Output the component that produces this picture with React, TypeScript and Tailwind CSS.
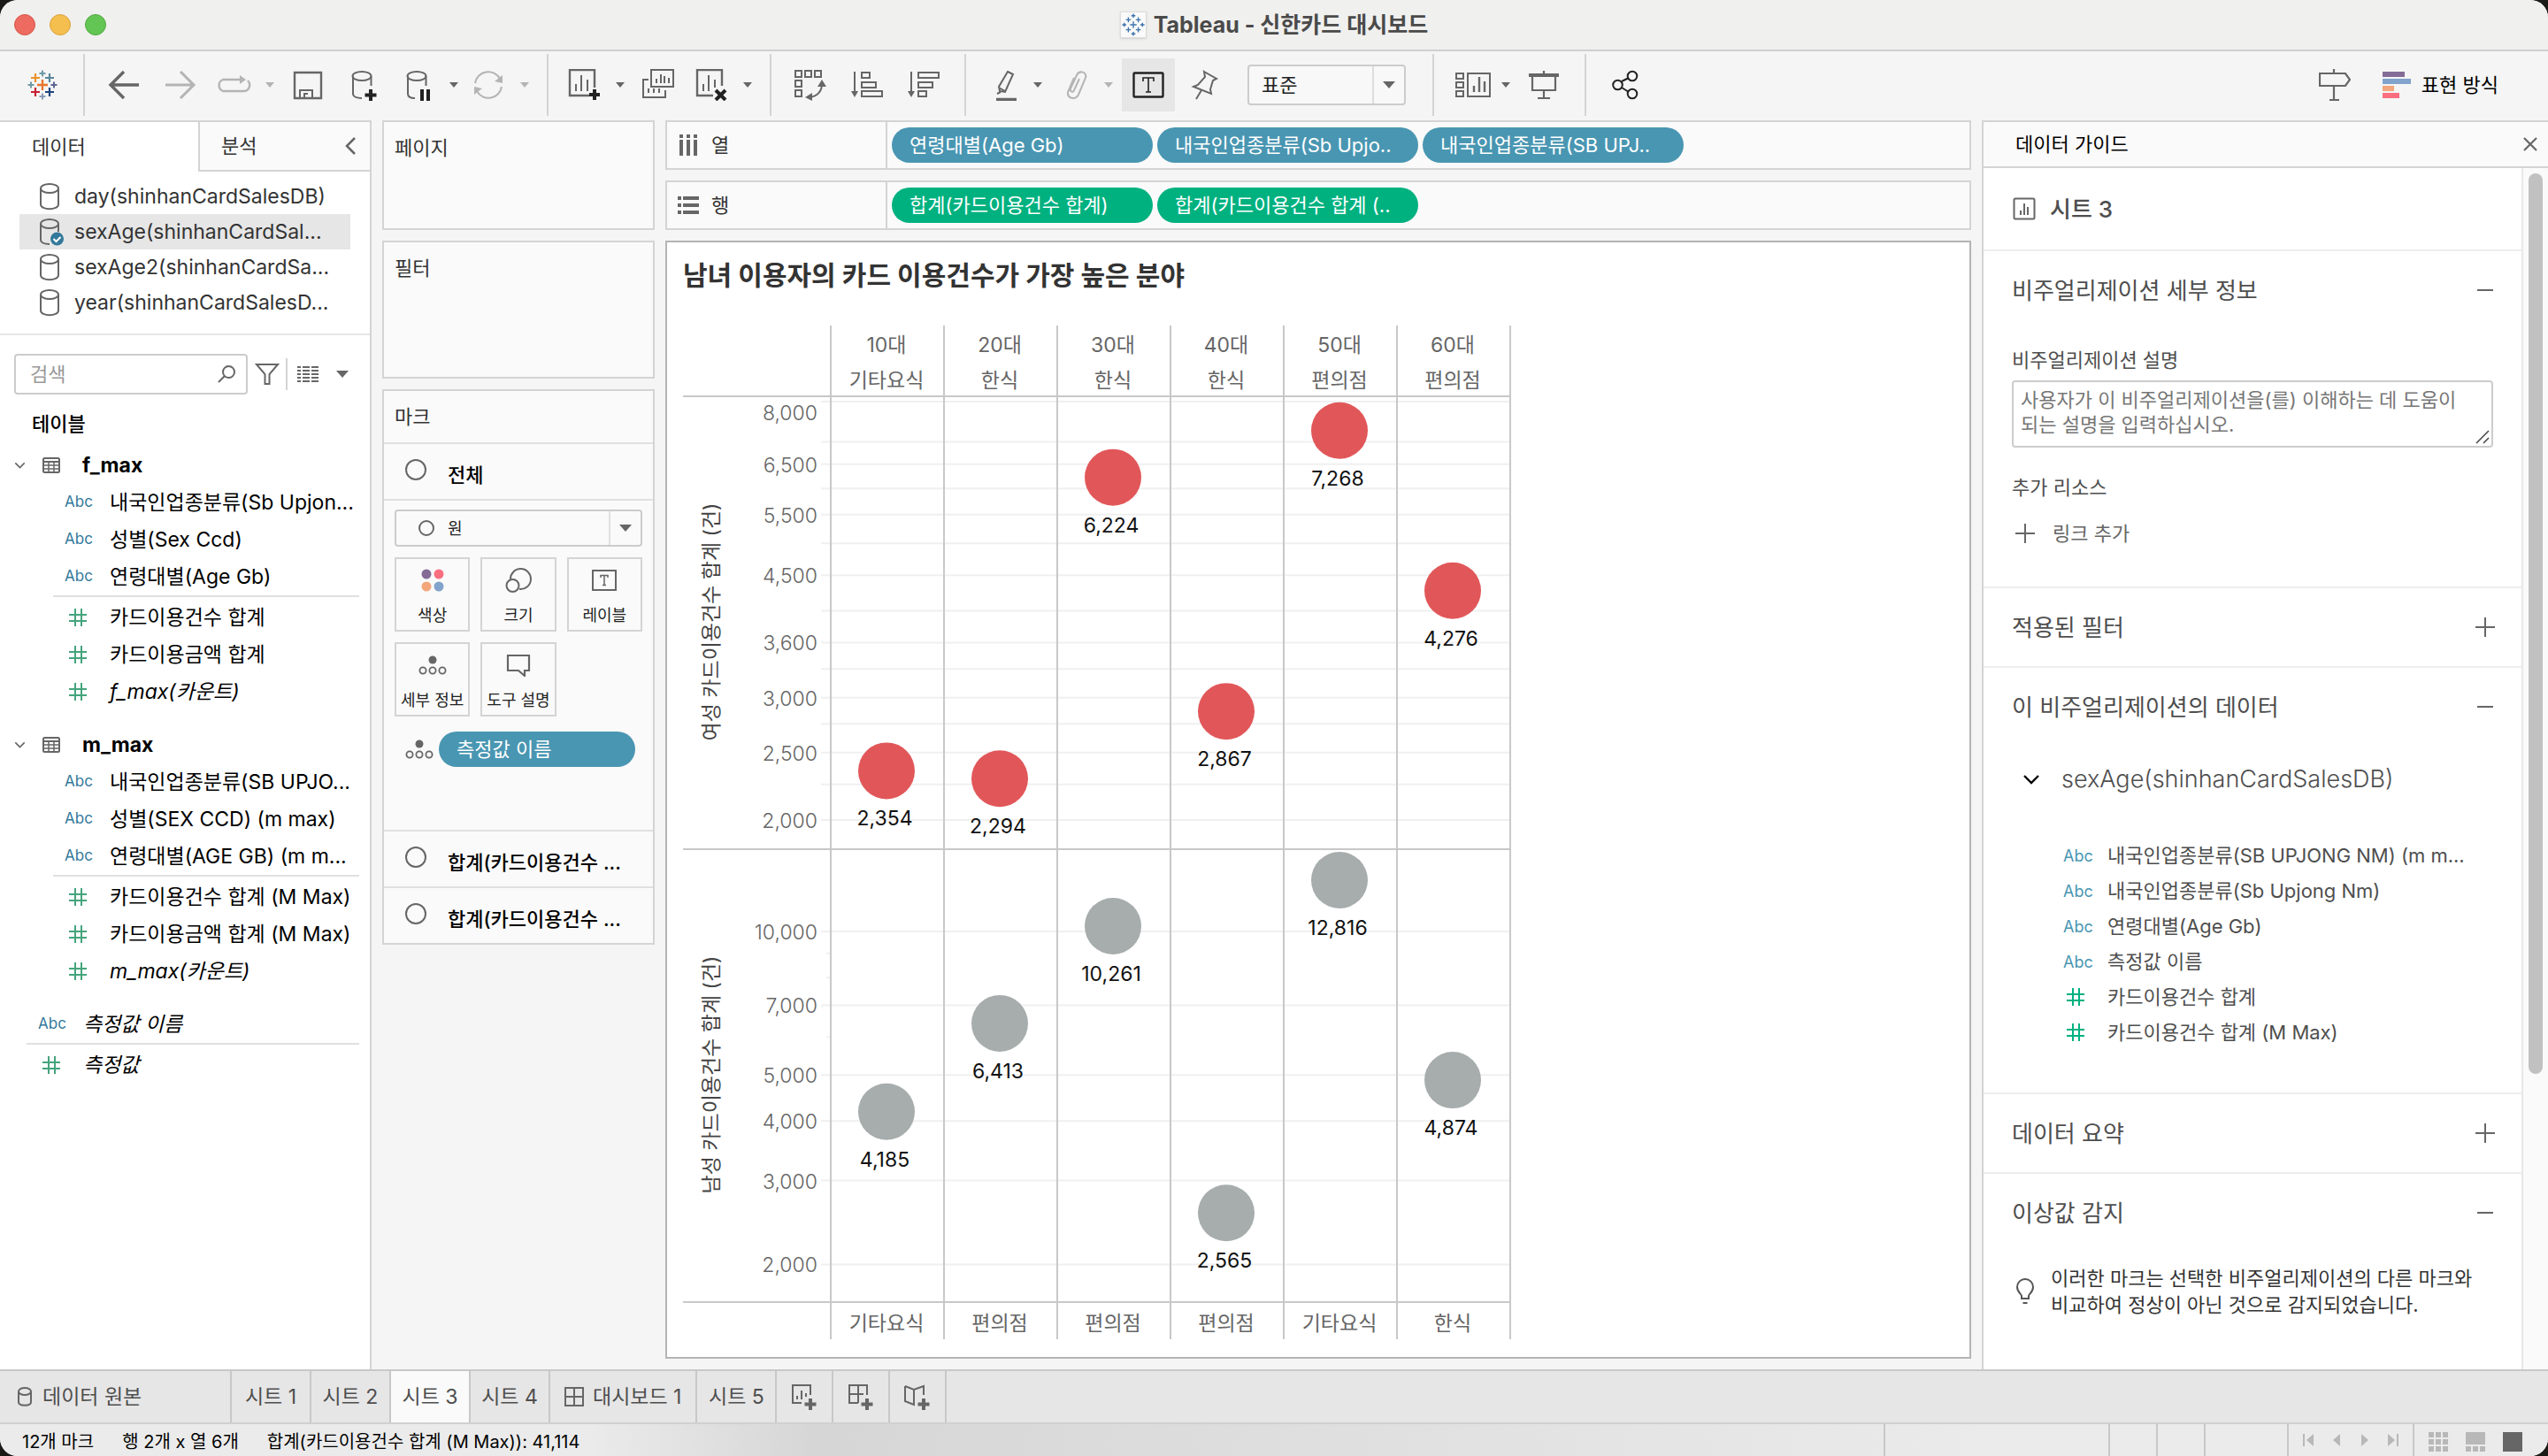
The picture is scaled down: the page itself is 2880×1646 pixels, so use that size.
import React from "react";
import type { ReactNode } from "react";

/* ---------- small drawing helpers ---------- */

type SvgProps = { className?: string; children: ReactNode };

// every toolbar icon is drawn on the same 36 x 36 grid
const Tool36 = ({ className = "", children }: SvgProps) => (
  <svg
    viewBox="0 0 36 36"
    fill="none"
    stroke="currentColor"
    strokeWidth="2"
    className={`h-9 w-9 shrink-0 ${className}`}
    aria-hidden="true"
  >
    {children}
  </svg>
);

const Caret = ({ className = "" }: { className?: string }) => (
  <svg viewBox="0 0 10 6" className={`h-[6px] w-[10px] shrink-0 ${className}`} aria-hidden="true">
    <path d="M0 0h10L5 6z" fill="currentColor" />
  </svg>
);

const BigCaret = () => (
  <svg viewBox="0 0 14 8" className="h-2 w-[14px] shrink-0 text-[#666]" aria-hidden="true">
    <path d="M0 0h14L7 8z" fill="currentColor" />
  </svg>
);

const Divider = ({ className = "" }: { className?: string }) => (
  <span className={`h-[70px] w-[2px] shrink-0 bg-[#d4d4d4] ${className}`} />
);

const Chevron = ({ className = "" }: { className?: string }) => (
  <svg viewBox="0 0 20 12" className={className} fill="none" stroke="currentColor" strokeWidth="2.4" aria-hidden="true">
    <path d="M2 2l8 8 8-8" />
  </svg>
);

const Hash = ({ className = "" }: { className?: string }) => (
  <svg viewBox="0 0 20 20" className={`h-5 w-5 shrink-0 ${className}`} fill="none" stroke="currentColor" strokeWidth="2" aria-hidden="true">
    <path d="M0 7h20M0 14h20M7 0v20M14 0v20" />
  </svg>
);

const Circle = ({ className = "" }: { className?: string }) => (
  <span className={`shrink-0 rounded-full border-2 border-[#666] ${className}`} />
);

const DetailDots = () => (
  <svg viewBox="0 0 32 22" className="h-[22px] w-8 shrink-0" fill="none" stroke="#666" strokeWidth="1.8" aria-hidden="true">
    <circle cx="16" cy="5" r="4.5" fill="#666" stroke="none" />
    <circle cx="5" cy="17" r="3.6" />
    <circle cx="16" cy="17" r="3.6" />
    <circle cx="27" cy="17" r="3.6" />
  </svg>
);

const Plus = ({ x, y, s, c, w = 2 }: { x: number; y: number; s: number; c: string; w?: number }) => (
  <path d={`M${x - s} ${y}H${x + s}M${x} ${y - s}V${y + s}`} stroke={c} strokeWidth={w} />
);

/* ---------- title bar ---------- */

const TitleBar = () => (
  <header className="relative flex h-[58px] shrink-0 items-center justify-center border-b-2 border-[#d0d0d0] bg-[#f0f0ee]">
    <div className="absolute left-4 flex gap-4">
      <button type="button" aria-label="닫기" className="h-6 w-6 rounded-full border border-[#d75549] bg-[#ed6b60]" />
      <button type="button" aria-label="최소화" className="h-6 w-6 rounded-full border border-[#d8a13d] bg-[#f5bf4f]" />
      <button type="button" aria-label="확대" className="h-6 w-6 rounded-full border border-[#54a941] bg-[#62c554]" />
    </div>
    <h1 className="flex items-center gap-2 text-[25px] font-bold leading-8 text-[#4a4a4a]">
      <svg viewBox="0 0 30 30" className="h-[30px] w-[30px] border border-[#ddd] bg-[#fafafa] shadow" fill="none" aria-hidden="true">
        <Plus x={15} y={15} s={4} c="#3d74ab" w={1.5} />
        <Plus x={9} y={9} s={3} c="#3d74ab" w={1.5} />
        <Plus x={21} y={9} s={3} c="#3d74ab" w={1.5} />
        <Plus x={9} y={21} s={3} c="#3d74ab" w={1.5} />
        <Plus x={21} y={21} s={3} c="#3d74ab" w={1.5} />
        <Plus x={15} y={4} s={2.5} c="#3d74ab" w={1.5} />
        <Plus x={15} y={26} s={2.5} c="#3d74ab" w={1.5} />
        <Plus x={4} y={15} s={2.5} c="#3d74ab" w={1.5} />
        <Plus x={26} y={15} s={2.5} c="#3d74ab" w={1.5} />
      </svg>
      Tableau - 신한카드 대시보드
    </h1>
  </header>
);

/* ---------- toolbar ---------- */

type ToolProps = { label: string; className?: string; children: ReactNode };

const Tool = ({ label, className = "", children }: ToolProps) => (
  <button type="button" aria-label={label} title={label} className={`flex shrink-0 items-center ${className}`}>
    {children}
  </button>
);

const Toolbar = () => (
  <nav aria-label="도구 모음" className="flex h-[78px] shrink-0 items-center pb-[2px] pl-[30px] pr-14 text-[#666]">
    <Tool label="시작 페이지">
      <Tool36>
        <Plus x={18} y={18} s={6} c="#e8762d" w={2.4} />
        <Plus x={10} y={10} s={5} c="#eb912c" w={2.2} />
        <Plus x={26} y={10} s={5} c="#59879b" w={2.2} />
        <Plus x={10} y={26} s={5} c="#c72035" w={2.2} />
        <Plus x={26} y={26} s={5} c="#1f457e" w={2.2} />
        <Plus x={18} y={5} s={3.5} c="#7099a6" />
        <Plus x={18} y={31} s={3.5} c="#8b9bb8" />
        <Plus x={5} y={18} s={3.5} c="#7099a6" />
        <Plus x={31} y={18} s={3.5} c="#5c6692" />
      </Tool36>
    </Tool>
    <Divider className="ml-7" />
    <Tool label="뒤로" className="ml-6.5">
      <Tool36>
        <path d="M3 18h32M18 3L3 18l15 15" strokeWidth="3.4" />
      </Tool36>
    </Tool>
    <Tool label="앞으로" className="ml-7 text-[#b4b4b4]">
      <Tool36>
        <path d="M1 18h32M18 3l15 15-15 15" strokeWidth="3" />
      </Tool36>
    </Tool>
    <Tool label="다시 실행" className="ml-6 text-[#b4b4b4]">
      <Tool36 className="overflow-visible">
        <path d="M27 12H6a7 7 0 0 0 0 13h24a7 7 0 0 0 4-12" strokeWidth="2.4" />
        <path d="M25 7l7 5-7 5z" fill="currentColor" stroke="none" />
      </Tool36>
    </Tool>
    <Caret className="ml-4.5 text-[#b4b4b4]" />
    <Tool label="저장" className="ml-5">
      <Tool36>
        <path d="M3 4h30v29H3z" strokeWidth="2.4" />
        <path d="M9 33V24h14v9M14 33v-5h4" />
      </Tool36>
    </Tool>
    <Tool label="새 데이터 원본" className="ml-7">
      <Tool36>
        <ellipse cx="15" cy="8" rx="10.5" ry="5" />
        <path d="M5 8v20c0 3 4 5 10 5M25.5 8v11" />
        <path d="M25 23v13M18.5 29.5h13" stroke="#222" strokeWidth="4" />
      </Tool36>
    </Tool>
    <Tool label="자동 업데이트 일시 중지" className="ml-6.5">
      <Tool36>
        <ellipse cx="15" cy="8" rx="10.5" ry="5" />
        <path d="M5 8v20c0 3 3 5 8 5M25.5 8v11" />
        <path d="M21 23v13M28 23v13" stroke="#222" strokeWidth="4" />
      </Tool36>
    </Tool>
    <Caret className="ml-4" />
    <Tool label="새로 고침" className="ml-4 text-[#b4b4b4]">
      <Tool36>
        <path d="M3 16A15 15 0 0 1 31 11M33 20A15 15 0 0 1 5 25" />
        <path d="M34 7v9l-9-2zM2 29v-9l9 2z" fill="currentColor" stroke="none" />
      </Tool36>
    </Tool>
    <Caret className="ml-4.5 text-[#b4b4b4]" />
    <Divider className="ml-5" />
    <Tool label="새 워크시트" className="ml-5.5">
      <Tool36>
        <path d="M24 30H2V1h28v20" strokeWidth="2.4" />
        <path d="M9 25v-8M15 25V7M22 25V12" />
        <path d="M30 23v12M24 29h12" stroke="#222" strokeWidth="4" />
      </Tool36>
    </Tool>
    <Caret className="ml-4.5" />
    <Tool label="복제" className="ml-5">
      <Tool36>
        <path d="M10 1h25v19H10z" />
        <path d="M16 16v-5M21 16V6M25 16V8M30 16v-6" />
        <path d="M7 12H1v20h25v-8M7 27v-5M13 27v-5M19 27v-5" />
      </Tool36>
    </Tool>
    <Tool label="시트 지우기" className="ml-6">
      <Tool36>
        <path d="M20 30H2V1h28v18" strokeWidth="2.4" />
        <path d="M9 25v-8M15 25V7M22 21V12" />
        <path d="M23 24l11 11M34 24L23 35" stroke="#222" strokeWidth="4" />
      </Tool36>
    </Tool>
    <Caret className="ml-4.5" />
    <Divider className="ml-5" />
    <Tool label="행과 열 바꾸기" className="ml-6.5">
      <Tool36>
        <path d="M1 2h7v7H1zM12 2h7v7h-7zM23 2h7v7h-7zM1 13h7v7H1zM1 24h7v7H1z" />
        <path d="M31 17c0 8-5 14-14 15" />
        <path d="M31 12l5 8H26zM12 32l8-5v9z" fill="currentColor" stroke="none" />
      </Tool36>
    </Tool>
    <Tool label="오름차순 정렬" className="ml-7">
      <Tool36>
        <path d="M4 3v24M12 4h9v6h-9zM12 15h16v6H12zM12 25h23v6H12z" />
        <path d="M0 25h8l-4 7z" fill="currentColor" stroke="none" />
      </Tool36>
    </Tool>
    <Tool label="내림차순 정렬" className="ml-7">
      <Tool36>
        <path d="M4 3v24M12 4h23v6H12zM12 15h16v6H12zM12 25h9v6h-9z" />
        <path d="M0 25h8l-4 7z" fill="currentColor" stroke="none" />
      </Tool36>
    </Tool>
    <Divider className="ml-7" />
    <Tool label="하이라이트" className="ml-7">
      <Tool36>
        <path d="M19 3l6 3-9 20-6-1-1-5zM9 21l7 4M7 28l4-2" />
        <path d="M6 34.5h23" strokeWidth="3.5" />
      </Tool36>
    </Tool>
    <Caret className="ml-3" />
    <Tool label="멤버 그룹화" className="ml-5 text-[#b4b4b4]">
      <Tool36>
        <path d="M22 11l-6 13c-1 3-5 2-4-2l7-15c3-6 12-4 10 3l-8 19c-3 6-13 5-12-3l7-16" />
      </Tool36>
    </Tool>
    <Caret className="ml-3.5 text-[#b4b4b4]" />
    <Tool label="마크 레이블 표시" className="ml-2.5 h-[60px] w-[60px] justify-center bg-[#e6e6e6]">
      <svg viewBox="0 0 36 30" className="h-[30px] w-9" fill="none" stroke="#222" aria-hidden="true">
        <rect x="1.5" y="1.5" width="33" height="27" rx="1" strokeWidth="2.4" />
        <path d="M12 11V7h12v4M18 7v16M15 23h6" strokeWidth="1.6" />
      </svg>
    </Tool>
    <Tool label="축 고정" className="ml-4">
      <Tool36>
        <path d="M17 3l14 8-4 2-3 10 1 5L5 20l5-2 8-9zM14 24L8 34" />
      </Tool36>
    </Tool>
    <div className="relative ml-7.5 flex h-[46px] w-[179px] shrink-0 items-center">
      <select
        aria-label="맞춤"
        className="h-full w-full appearance-none rounded-sm border-2 border-[#ccc] bg-[#f8f8f8] pl-[14px] text-[22px] text-[#222]"
      >
        <option>표준</option>
      </select>
      <span className="pointer-events-none absolute right-[2px] flex h-[42px] w-9 items-center justify-center border-l-2 border-[#ddd]">
        <BigCaret />
      </span>
    </div>
    <Divider className="ml-7.5" />
    <Tool label="카드 표시/숨기기" className="ml-6.5">
      <Tool36 className="overflow-visible">
        <path d="M-1 5h8v6h-8zM-1 15h8v6h-8zM-1 25h8v6h-8zM12 5h25v26H12z" />
        <path d="M19 26v-7M25 26V9M31 26V14" strokeWidth="2.4" />
      </Tool36>
    </Tool>
    <Caret className="ml-3.5" />
    <Tool label="프레젠테이션 모드" className="ml-5">
      <Tool36>
        <path d="M1 7h34" strokeWidth="4" />
        <path d="M5 8v16h26V8M18 2v3M18 24v9M11 33h14" strokeWidth="2.2" />
      </Tool36>
    </Tool>
    <Divider className="ml-7" />
    <Tool label="공유" className="ml-6.5 text-[#222]">
      <Tool36>
        <path d="M14 14l8-4M14 21l8 5" />
        <circle cx="9.5" cy="18" r="5.3" />
        <circle cx="26" cy="8" r="5.3" />
        <circle cx="26" cy="28" r="5.3" />
      </Tool36>
    </Tool>
    <Tool label="데이터 가이드" className="ml-auto">
      <Tool36>
        <path d="M1 5h29l5 7-5 7H1zM17 0v5M17 19v16M12 35h11" strokeWidth="2.2" />
      </Tool36>
    </Tool>
    <button type="button" className="ml-9 flex shrink-0 items-center gap-3 text-[22px] text-black">
      <svg viewBox="0 0 32 30" className="h-[30px] w-8" aria-hidden="true">
        <path d="M0 0h25v6H0z" fill="#846c96" />
        <path d="M0 8h32v6H0z" fill="#82a3cb" />
        <path d="M0 16h13v6H0z" fill="#f4a67c" />
        <path d="M0 24h19v6H0z" fill="#fa6f80" />
      </svg>
      표현 방식
    </button>
  </nav>
);

/* ---------- data pane ---------- */

const sources = [
  { name: "day(shinhanCardSalesDB)", active: false },
  { name: "sexAge(shinhanCardSal...", active: true },
  { name: "sexAge2(shinhanCardSa...", active: false },
  { name: "year(shinhanCardSalesD...", active: false },
];

const tables = [
  {
    name: "f_max",
    dimensions: ["내국인업종분류(Sb Upjon...", "성별(Sex Ccd)", "연령대별(Age Gb)"],
    measures: ["카드이용건수 합계", "카드이용금액 합계"],
    count: "f_max(카운트)",
  },
  {
    name: "m_max",
    dimensions: ["내국인업종분류(SB UPJO...", "성별(SEX CCD) (m max)", "연령대별(AGE GB) (m m..."],
    measures: ["카드이용건수 합계 (M Max)", "카드이용금액 합계 (M Max)"],
    count: "m_max(카운트)",
  },
];

const DbIcon = ({ checked }: { checked: boolean }) => (
  <svg viewBox="0 0 28 32" className="h-8 w-7 shrink-0" fill="none" stroke="#666" strokeWidth="2" aria-hidden="true">
    <ellipse cx="11" cy="7" rx="10" ry="5" />
    <path d={checked ? "M1 7v18c0 3 4 5 10 5M21 7v9" : "M1 7v18c0 7 20 7 20 0V7"} />
    {checked && (
      <>
        <circle cx="19.5" cy="24" r="7.5" fill="#33799b" stroke="none" />
        <path d="M15.5 24l3 3 5-5" stroke="#fff" />
      </>
    )}
  </svg>
);

const TableIcon = () => (
  <svg viewBox="0 0 20 18" className="h-[18px] w-5 shrink-0" fill="none" stroke="#666" strokeWidth="2" aria-hidden="true">
    <rect x="1" y="1" width="18" height="16" rx="1.5" />
    <path d="M1 5h18" />
    <path d="M2 9h16M2 13h16M7 5v12M13 5v12" strokeWidth="1.5" />
  </svg>
);

const FieldRow = ({ kind, name, italic = false }: { kind: "abc" | "num"; name: string; italic?: boolean }) => (
  <li className="flex h-[42px] items-center text-[23px]">
    <span className="flex w-[51px] shrink-0 items-center">
      {kind === "abc" ? (
        <span className="text-[17px] text-[#33799b]">Abc</span>
      ) : (
        <Hash className="ml-[5px] text-[#45a47c]" />
      )}
    </span>
    <span className={italic ? "whitespace-nowrap italic" : "whitespace-nowrap"}>{name}</span>
  </li>
);

const DataPane = () => (
  <aside className="flex w-[420px] shrink-0 flex-col border-r-2 border-t-2 border-[#d4d4d4] bg-white text-[22px] text-black">
    <div className="flex h-14 shrink-0">
      <button type="button" className="w-[224px] pl-9 text-left text-[#333]">
        데이터
      </button>
      <div className="flex flex-1 items-center justify-between border-b-2 border-l-2 border-[#d4d4d4] bg-[#fafafa] pl-6 pr-4 text-[#333]">
        <button type="button">분석</button>
        <button type="button" aria-label="창 접기" className="text-[#666]">
          <svg viewBox="0 0 12 20" className="h-5 w-3" fill="none" stroke="currentColor" strokeWidth="2.5" aria-hidden="true">
            <path d="M11 1L2 10l9 9" />
          </svg>
        </button>
      </div>
    </div>

    <ul className="mt-2 shrink-0 pl-[22px] pr-[22px] text-[23px] text-[#333]">
      {sources.map((s) => (
        <li
          key={s.name}
          className={
            s.active
              ? "flex h-10 items-center gap-[11px] bg-[#e6e6e6] pl-[23px]"
              : "flex h-10 items-center gap-[11px] pl-[23px]"
          }
        >
          <DbIcon checked={s.active} />
          <span className="whitespace-nowrap">{s.name}</span>
        </li>
      ))}
    </ul>

    <div className="mt-[15px] border-t-2 border-[#e6e6e6]" />

    <div className="mt-[21px] flex shrink-0 items-center pl-4">
      <div className="flex h-[46px] w-[264px] items-center rounded-sm border-2 border-[#ccc] pl-4 pr-3">
        <input
          type="text"
          aria-label="검색"
          placeholder="검색"
          className="w-full min-w-0 bg-transparent outline-none placeholder:text-[#999]"
        />
        <svg viewBox="0 0 20 20" className="h-5 w-5 shrink-0" fill="none" stroke="#666" strokeWidth="2" aria-hidden="true">
          <circle cx="12.5" cy="7.5" r="6.5" />
          <path d="M8 12l-7 7" />
        </svg>
      </div>
      <button type="button" aria-label="필터" className="ml-2">
        <svg viewBox="0 0 28 26" className="h-[26px] w-7" fill="none" stroke="#666" strokeWidth="2" aria-hidden="true">
          <path d="M2 2h24L16.5 13v11h-5V13z" />
        </svg>
      </button>
      <span className="ml-[7px] h-9 w-[2px] bg-[#d4d4d4]" />
      <button type="button" aria-label="보기" className="ml-[11px] flex items-center gap-5">
        <svg viewBox="0 0 24 18" className="h-[18px] w-6" stroke="#666" strokeWidth="2" aria-hidden="true">
          <path d="M0 1h4M6 1h8M16 1h8M0 5h4M6 5h8M16 5h8M0 9h4M6 9h8M16 9h8M0 13h4M6 13h8M16 13h8M0 17h4M6 17h8M16 17h8" />
        </svg>
        <BigCaret />
      </button>
    </div>

    <h2 className="mt-[17px] h-8 pl-9 font-medium leading-8">테이블</h2>

    <div className="mt-[10px]">
      {tables.map((t) => (
        <section key={t.name} className="mb-[18px]">
          <h3 className="flex h-[42px] items-center pl-4 text-[23px] font-bold">
            <Chevron className="h-2 w-[13px] text-[#666]" />
            <span className="ml-[19px] mr-[25px] flex">
              <TableIcon />
            </span>
            {t.name}
          </h3>
          <ul className="pl-[73px]">
            {t.dimensions.map((d) => (
              <FieldRow key={d} kind="abc" name={d} />
            ))}
          </ul>
          <div className="ml-[60px] mr-3 border-t-2 border-[#e0e0e0]" />
          <ul className="pl-[73px] pt-[2px]">
            {t.measures.map((m) => (
              <FieldRow key={m} kind="num" name={m} />
            ))}
            <FieldRow kind="num" name={t.count} italic />
          </ul>
        </section>
      ))}
      <ul className="pl-[43px]">
        <FieldRow kind="abc" name="측정값 이름" italic />
      </ul>
      <div className="ml-[30px] mr-3 border-t-2 border-[#e0e0e0]" />
      <ul className="pl-[43px] pt-[2px]">
        <FieldRow kind="num" name="측정값" italic />
      </ul>
    </div>
  </aside>
);

/* ---------- cards column ---------- */

const MarkRow = ({ name }: { name: string }) => (
  <button type="button" className="flex h-16 w-full items-center border-t-2 border-[#e0e0e0] pl-6 text-left font-medium text-black">
    <Circle className="mb-1 mr-6 h-6 w-6" />
    <span className="whitespace-nowrap pt-2">{name}</span>
  </button>
);

const MarkButton = ({ label, children }: { label: string; children: ReactNode }) => (
  <button type="button" className="flex h-[84px] flex-col items-center border-2 border-[#d4d4d4] pt-2 text-[18px] text-[#222]">
    <span className="flex h-8 items-center">{children}</span>
    <span className="mt-2 whitespace-nowrap leading-8">{label}</span>
  </button>
);

const Cards = () => (
  <div className="ml-3 flex w-[308px] shrink-0 flex-col gap-3 text-[22px] text-[#333]">
    <section className="h-[124px] border-2 border-[#d4d4d4] bg-[#fafafa] px-3 pt-[13px]">
      <h2 className="leading-8">페이지</h2>
    </section>
    <section className="h-[156px] border-2 border-[#d4d4d4] bg-[#fafafa] px-3 pt-[13px]">
      <h2 className="leading-8">필터</h2>
    </section>
    <section className="border-2 border-[#d4d4d4] bg-[#fafafa]">
      <h2 className="flex h-[58px] items-center px-3">마크</h2>
      <MarkRow name="전체" />
      <div className="h-[374px] border-t-2 border-[#e0e0e0] px-3 pt-[10px]">
        <div className="relative flex h-[42px] items-center">
          <select
            aria-label="마크 유형"
            className="h-full w-full appearance-none rounded-sm border-2 border-[#ccc] bg-[#fafafa] pl-[58px] text-[18px] text-[#222]"
          >
            <option>원</option>
          </select>
          <Circle className="pointer-events-none absolute left-[27px] h-[18px] w-[18px]" />
          <span className="pointer-events-none absolute right-[2px] flex h-[38px] w-9 items-center justify-center border-l-2 border-[#e0e0e0]">
            <BigCaret />
          </span>
        </div>
        <div className="mt-3 grid grid-cols-3 gap-3">
          <MarkButton label="색상">
            <svg viewBox="0 0 26 26" className="h-[26px] w-[26px]" aria-hidden="true">
              <circle cx="6" cy="6" r="5.5" fill="#846c96" />
              <circle cx="20" cy="6" r="5.5" fill="#fa6f80" />
              <circle cx="6" cy="20" r="5.5" fill="#f4a67c" />
              <circle cx="20" cy="20" r="5.5" fill="#82a3cb" />
            </svg>
          </MarkButton>
          <MarkButton label="크기">
            <svg viewBox="0 0 30 28" className="h-7 w-[30px]" fill="none" stroke="#666" strokeWidth="2" aria-hidden="true">
              <path d="M6 13a11.500 11.500 0 1 1 10 11" />
              <circle cx="8.5" cy="20" r="7" />
            </svg>
          </MarkButton>
          <MarkButton label="레이블">
            <svg viewBox="0 0 28 24" className="h-6 w-7" fill="none" stroke="#666" strokeWidth="2" aria-hidden="true">
              <path d="M1 1h26v22H1z" />
              <path d="M10 9V6.500h8V9M14 6.500v11M12 17.500h4" strokeWidth="1.5" />
            </svg>
          </MarkButton>
          <MarkButton label="세부 정보">
            <DetailDots />
          </MarkButton>
          <MarkButton label="도구 설명">
            <svg viewBox="0 0 28 26" className="h-[26px] w-7" fill="none" stroke="#666" strokeWidth="2.2" aria-hidden="true">
              <path d="M2 2h24v17h-5v6l-7-6H2z" />
            </svg>
          </MarkButton>
        </div>
        <div className="mt-[17px] flex items-center pl-3 pr-2">
          <DetailDots />
          <button type="button" className="ml-[6px] h-10 flex-1 rounded-full bg-[#4996b2] pl-5 text-left text-white">
            측정값 이름
          </button>
        </div>
      </div>
      <MarkRow name="합계(카드이용건수 ..." />
      <MarkRow name="합계(카드이용건수 ..." />
    </section>
  </div>
);

/* ---------- shelves ---------- */

const Shelf = ({ label, icon, children }: { label: string; icon: ReactNode; children: ReactNode }) => (
  <div className="flex h-14 shrink-0 items-stretch border-2 border-[#d4d4d4] bg-[#fafafa] text-[22px]">
    <div className="flex w-[249px] items-center gap-[14px] border-r-2 border-[#d4d4d4] pl-3 text-[#333]">
      {icon}
      {label}
    </div>
    <div className="flex items-center gap-[5px] pl-[5px]">{children}</div>
  </div>
);

const bluePills = ["연령대별(Age Gb)", "내국인업종분류(Sb Upjo..", "내국인업종분류(SB UPJ.."];
const greenPills = ["합계(카드이용건수 합계)", "합계(카드이용건수 합계 (.."];

/* ---------- chart ---------- */

const COL_W = 128;
const LEFT = 167;
const TOP = 80;
const MID = 592;
const BOTTOM = 1104;
const RIGHT = LEFT + COL_W * 6;

const yFemale = (v: number) => 86 + 341.2 * Math.log(8000 / v);
const yMale = (v: number) => 685 + 233.9 * Math.log(10000 / v);

const columns = [
  { age: "10대", female: "기타요식", male: "기타요식", f: 2354, m: 4185 },
  { age: "20대", female: "한식", male: "편의점", f: 2294, m: 6413 },
  { age: "30대", female: "한식", male: "편의점", f: 6224, m: 10261 },
  { age: "40대", female: "한식", male: "편의점", f: 2867, m: 2565 },
  { age: "50대", female: "편의점", male: "기타요식", f: 7268, m: 12816 },
  { age: "60대", female: "편의점", male: "한식", f: 4276, m: 4874 },
];

const femaleTicks = [8000, 6500, 5500, 4500, 3600, 3000, 2500, 2000];
const femaleMinor = [7000, 6000, 5000, 4000, 3300, 2750, 2250];
const maleTicks = [10000, 7000, 5000, 4000, 3000, 2000];
const maleMinor = [9000, 8000, 6000];

const fmt = (n: number) => n.toLocaleString("en-US");

const Chart = () => (
  <svg
    viewBox="0 0 938 1148"
    className="h-[1148px] w-[938px] shrink-0"
    fontSize="23"
    role="img"
    aria-label="남녀 이용자의 카드 이용건수가 가장 높은 분야"
  >
    {/* grid */}
    <g stroke="#f0f0f0" strokeWidth="2">
      {[...femaleTicks, ...femaleMinor].map((v) => (
        <path key={v} d={`M156 ${yFemale(v)}H${RIGHT}`} />
      ))}
      {maleTicks.map((v) => (
        <path key={v} d={`M156 ${yMale(v)}H${RIGHT}`} />
      ))}
      {maleMinor.map((v) => (
        <path key={v} d={`M162 ${yMale(v)}H${LEFT}`} />
      ))}
    </g>
    <g stroke="#c8c8c8" strokeWidth="2">
      {Array.from({ length: 7 }, (_, i) => (
        <path key={i} d={`M${LEFT + i * COL_W} 0V1146`} />
      ))}
      <path d={`M0 ${TOP}H${RIGHT}M0 ${MID}H${RIGHT}M0 ${BOTTOM}H${RIGHT}`} />
    </g>

    {/* axes */}
    <g fill="#666" textAnchor="end" fontWeight="300">
      {femaleTicks.map((v) => (
        <text key={v} x="152" y={yFemale(v) + (v === 8000 ? 21 : 9)}>
          {fmt(v)}
        </text>
      ))}
      {maleTicks.map((v) => (
        <text key={v} x="152" y={yMale(v) + 9}>
          {fmt(v)}
        </text>
      ))}
    </g>
    <g fill="#444" textAnchor="middle">
      <text transform="translate(40 335) rotate(-90)">여성 카드이용건수 합계 (건)</text>
      <text transform="translate(40 847) rotate(-90)">남성 카드이용건수 합계 (건)</text>
    </g>

    {/* headers and marks */}
    {columns.map((c, i) => {
      const cx = LEFT + COL_W * i + COL_W / 2;
      return (
        <g key={c.age} textAnchor="middle">
          <g fill="#666">
            <text x={cx - 1} y="30">{c.age}</text>
            <text x={cx - 1} y="70">{c.female}</text>
            <text x={cx - 1} y="1136">{c.male}</text>
          </g>
          <circle cx={cx - 1} cy={yFemale(c.f)} r="32" fill="#e15759" />
          <circle cx={cx - 1} cy={yMale(c.m)} r="32" fill="#a6adac" />
          <g fill="#111">
            <text x={cx - 3} y={yFemale(c.f) + 62}>{fmt(c.f)}</text>
            <text x={cx - 3} y={yMale(c.m) + 62}>{fmt(c.m)}</text>
          </g>
        </g>
      );
    })}
  </svg>
);

const Worksheet = () => (
  <main className="mx-3 flex min-w-0 flex-1 flex-col gap-3 pb-3">
    <Shelf
      label="열"
      icon={
        <svg viewBox="0 0 24 24" className="h-6 w-6" stroke="#666" strokeWidth="4" aria-hidden="true">
          <path d="M4 0v4M12 0v4M20 0v4M4 6v18M12 6v18M20 6v18" />
        </svg>
      }
    >
      {bluePills.map((p) => (
        <button key={p} type="button" className="h-10 w-[295px] whitespace-nowrap rounded-full bg-[#4996b2] pl-5 text-left text-white">
          {p}
        </button>
      ))}
    </Shelf>
    <Shelf
      label="행"
      icon={
        <svg viewBox="0 0 24 24" className="h-6 w-6" stroke="#666" strokeWidth="4" aria-hidden="true">
          <path d="M0 4h4M6 4h18M0 12h4M6 12h18M0 20h4M6 20h18" />
        </svg>
      }
    >
      {greenPills.map((p) => (
        <button key={p} type="button" className="h-10 w-[295px] whitespace-nowrap rounded-full bg-[#00b180] pl-5 text-left text-white">
          {p}
        </button>
      ))}
    </Shelf>
    <section className="min-h-0 flex-1 border-2 border-[#b4b4b4] bg-white pl-[18px]">
      <h2 className="flex h-[94px] items-start pt-[15px] text-[30px] font-bold leading-[44px] text-[#333]">
        남녀 이용자의 카드 이용건수가 가장 높은 분야
      </h2>
      <Chart />
    </section>
  </main>
);

/* ---------- data guide ---------- */

const guideFields: { kind: "abc" | "num"; name: string }[] = [
  { kind: "abc", name: "내국인업종분류(SB UPJONG NM) (m m..." },
  { kind: "abc", name: "내국인업종분류(Sb Upjong Nm)" },
  { kind: "abc", name: "연령대별(Age Gb)" },
  { kind: "abc", name: "측정값 이름" },
  { kind: "num", name: "카드이용건수 합계" },
  { kind: "num", name: "카드이용건수 합계 (M Max)" },
];

const Sign = ({ plus }: { plus: boolean }) => (
  <svg viewBox="0 0 22 22" className="h-[22px] w-[22px] shrink-0" stroke="#666" strokeWidth="2" aria-hidden="true">
    <path d={plus ? "M0 11h22M11 0v22" : "M2 11h18"} />
  </svg>
);

const GuideSection = ({ title, open = false, children }: { title: string; open?: boolean; children?: ReactNode }) => (
  <section className="border-t-2 border-[#eee] pl-8 pr-[30px]">
    <button type="button" aria-expanded={open} className="flex h-[88px] w-full items-center justify-between text-left text-[26px] text-[#4e4e4e]">
      {title}
      <Sign plus={!open} />
    </button>
    {children}
  </section>
);

const DataGuide = () => (
  <aside className="flex w-[640px] shrink-0 flex-col border-l-2 border-t-2 border-[#d4d4d4] bg-white text-[22px] text-[#4e4e4e]">
    <div className="flex h-[52px] shrink-0 items-center justify-between border-b-2 border-[#d4d4d4] bg-[#fafafa] pl-9 pr-3">
      <h2 className="text-black">데이터 가이드</h2>
      <button type="button" aria-label="닫기">
        <svg viewBox="0 0 16 16" className="h-4 w-4" stroke="#666" strokeWidth="2.2" aria-hidden="true">
          <path d="M1 1l14 14M15 1L1 15" />
        </svg>
      </button>
    </div>
    <div className="flex min-h-0 flex-1">
      <div className="min-w-0 flex-1 overflow-hidden">
        <div className="flex h-[92px] items-center gap-4 pl-[33px] text-[26px] font-medium">
          <svg viewBox="0 0 26 26" className="h-[26px] w-[26px]" fill="none" stroke="#666" strokeWidth="2" aria-hidden="true">
            <rect x="1.500" y="1.500" width="23" height="23" rx="1.500" />
            <path d="M9 20v-5M13 20V7M17 20v-9" />
          </svg>
          시트 3
        </div>

        <GuideSection title="비주얼리제이션 세부 정보" open>
          <div className="flex flex-col pb-[44px] pr-[2px] pt-[19px]">
            <label htmlFor="viz-description" className="leading-8">
              비주얼리제이션 설명
            </label>
            <div className="relative mt-[7px] flex">
              <textarea
                id="viz-description"
                placeholder="사용자가 이 비주얼리제이션을(를) 이해하는 데 도움이 되는 설명을 입력하십시오."
                className="h-[76px] w-full resize-none rounded-sm border-2 border-[#ccc] pb-2 pl-2 pr-6 pt-[6px] leading-7 outline-none placeholder:text-[#767676]"
              />
              <svg viewBox="0 0 16 16" className="absolute bottom-1 right-1 h-4 w-4" stroke="#444" strokeWidth="1.500" aria-hidden="true">
                <path d="M1 15L15 1M9 15l6-6" />
              </svg>
            </div>
            <h3 className="mt-[29px] leading-8">추가 리소스</h3>
            <button type="button" className="mt-5 flex h-8 items-center gap-5 pl-1 text-[#666]">
              <Sign plus />
              링크 추가
            </button>
          </div>
        </GuideSection>

        <GuideSection title="적용된 필터" />

        <GuideSection title="이 비주얼리제이션의 데이터" open>
          <div className="pb-12 pt-[18px]">
            <button type="button" className="flex h-10 items-center gap-6 pl-3 text-[27px] font-light">
              <Chevron className="h-3 w-5 text-black" />
              sexAge(shinhanCardSalesDB)
            </button>
            <ul className="mt-[46px] pl-[58px]">
              {guideFields.map((f) => (
                <li key={f.name} className="flex h-10 items-center">
                  <span className="flex w-[50px] shrink-0">
                    {f.kind === "abc" ? (
                      <span className="text-[18px] text-[#4996b2]">Abc</span>
                    ) : (
                      <Hash className="ml-1 text-[#00b180]" />
                    )}
                  </span>
                  <span className="whitespace-nowrap">{f.name}</span>
                </li>
              ))}
            </ul>
          </div>
        </GuideSection>

        <GuideSection title="데이터 요약" />

        <GuideSection title="이상값 감지" open>
          <div className="flex items-center gap-[18px] pl-1 pt-[15px] text-[#333]">
            <svg viewBox="0 0 22 30" className="h-[30px] w-[22px] shrink-0" fill="none" stroke="#555" strokeWidth="2" aria-hidden="true">
              <path d="M7 23v-3c0-2-5-4-5-10a9 9 0 0 1 18 0c0 6-5 8-5 10v3zM8.500 28h5" />
            </svg>
            <p className="leading-[30px]">
              이러한 마크는 선택한 비주얼리제이션의 다른 마크와
              <br />
              비교하여 정상이 아닌 것으로 감지되었습니다.
            </p>
          </div>
        </GuideSection>
      </div>
      <div className="w-[30px] shrink-0 border-l-2 border-[#e8e8e8] bg-[#fafafa] pl-[6px] pt-[6px]">
        <div className="h-[1018px] w-4 rounded-full bg-[#c1c1c1]" />
      </div>
    </div>
  </aside>
);

/* ---------- sheet tabs and status bar ---------- */

const SheetTab = ({ active = false, children }: { active?: boolean; children: ReactNode }) => (
  <button
    type="button"
    className={
      active
        ? "flex min-w-[90px] items-center justify-center gap-[10px] whitespace-nowrap border-r-2 border-[#c8c8c8] bg-[#fafafa] px-3"
        : "flex min-w-[90px] items-center justify-center gap-[10px] whitespace-nowrap border-r-2 border-[#c8c8c8] px-3"
    }
  >
    {children}
  </button>
);

const NewTab = ({ label, d }: { label: string; d: string }) => (
  <button type="button" aria-label={label} className="flex w-16 items-center justify-center border-r-2 border-[#c8c8c8]">
    <svg viewBox="0 0 30 30" className="h-[30px] w-[30px]" fill="none" stroke="#666" strokeWidth="2" aria-hidden="true">
      <path d={d} />
      <path d="M22 17v13M15.500 23.500h13" strokeWidth="4" />
    </svg>
  </button>
);

const SheetTabs = () => (
  <nav
    aria-label="시트"
    className="flex h-[62px] shrink-0 border-b-2 border-t-2 border-b-[#d0d0d0] border-t-[#c8c8c8] bg-[#e6e6e6] text-[23px] text-[#4e4e4e]"
  >
    <button type="button" className="flex w-[262px] items-center gap-3 border-r-2 border-[#c8c8c8] pl-5">
      <svg viewBox="0 0 16 22" className="h-[22px] w-4" fill="none" stroke="#666" strokeWidth="2" aria-hidden="true">
        <ellipse cx="8" cy="5" rx="7" ry="4" />
        <path d="M1 5v12c0 5 14 5 14 0V5" />
      </svg>
      데이터 원본
    </button>
    <SheetTab>시트 1</SheetTab>
    <SheetTab>시트 2</SheetTab>
    <SheetTab active>시트 3</SheetTab>
    <SheetTab>시트 4</SheetTab>
    <SheetTab>
      <svg viewBox="0 0 22 22" className="ml-1 h-[22px] w-[22px]" fill="none" stroke="#666" strokeWidth="2" aria-hidden="true">
        <path d="M1 1h20v20H1zM11 1v20M1 11h20" />
      </svg>
      <span className="mr-1">대시보드 1</span>
    </SheetTab>
    <SheetTab>시트 5</SheetTab>
    <NewTab label="새 워크시트" d="M12 22H2V2h20v11M7 18v-4M12 18V8M17 15v-4" />
    <NewTab label="새 대시보드" d="M12 22H2V2h20v11M12 2v20M2 12h16" />
    <NewTab label="새 스토리" d="M1 3l10 4 11-4v10M1 3v17l10 4V7" />
  </nav>
);

const Status = () => (
  <footer className="flex h-9 shrink-0 items-center justify-between bg-linear-to-r from-[#ebebeb] from-23% via-[#d6d6d6] via-32% to-[#ebebeb] to-79% pl-[25px] text-[20px] text-black">
    <div className="flex gap-8 whitespace-nowrap pt-1">
      <span>12개 마크</span>
      <span>행 2개 x 열 6개</span>
      <span>합계(카드이용건수 합계 (M Max)): 41,114</span>
    </div>
    <div className="flex h-full">
      <span className="w-[254px] border-l-2 border-[#c8c8c8]" />
      <span className="w-[54px] border-l-2 border-[#c8c8c8]" />
      <span className="w-[54px] border-l-2 border-[#c8c8c8]" />
      <span className="w-[94px] border-l-2 border-[#c8c8c8]" />
      <div className="flex w-[142px] items-center justify-between border-l-2 border-[#c8c8c8] px-4 text-[#b8b8b8]">
        <button type="button" aria-label="처음">
          <svg viewBox="0 0 13 14" className="h-[14px] w-[13px]" fill="currentColor" aria-hidden="true">
            <path d="M0 0h2v14H0zM12 0v14L4 7z" />
          </svg>
        </button>
        <button type="button" aria-label="이전">
          <svg viewBox="0 0 9 14" className="h-[14px] w-[9px]" fill="currentColor" aria-hidden="true">
            <path d="M8 0v14L0 7z" />
          </svg>
        </button>
        <button type="button" aria-label="다음">
          <svg viewBox="0 0 9 14" className="h-[14px] w-[9px]" fill="currentColor" aria-hidden="true">
            <path d="M1 0v14l8-7z" />
          </svg>
        </button>
        <button type="button" aria-label="마지막">
          <svg viewBox="0 0 13 14" className="h-[14px] w-[13px]" fill="currentColor" aria-hidden="true">
            <path d="M11 0h2v14h-2zM1 0v14l8-7z" />
          </svg>
        </button>
      </div>
      <div className="flex w-[153px] items-center gap-5 border-l-2 border-[#c8c8c8] pl-4 pt-1 text-[#b8b8b8]">
        <button type="button" aria-label="시트 정렬 보기">
          <svg viewBox="0 0 22 22" className="h-[22px] w-[22px]" fill="currentColor" aria-hidden="true">
            <path d="M0 0h6v6H0zM8 0h6v6H8zM16 0h6v6h-6zM0 8h6v6H0zM8 8h6v6H8zM16 8h6v6h-6zM0 16h6v6H0zM8 16h6v6H8zM16 16h6v6h-6z" />
          </svg>
        </button>
        <button type="button" aria-label="필름스트립 보기">
          <svg viewBox="0 0 22 22" className="h-[22px] w-[22px]" fill="currentColor" aria-hidden="true">
            <path d="M0 0h22v14H0zM0 16h6v6H0zM8 16h6v6H8zM16 16h6v6h-6z" />
          </svg>
        </button>
        <button type="button" aria-label="탭 보기" className="h-[22px] w-[22px] bg-[#666]" />
      </div>
    </div>
  </footer>
);

const App = () => (
  <div className="min-h-screen bg-[#1b1a17] font-['Inter','Noto_Sans_CJK_KR',sans-serif]">
    <div className="flex min-h-screen flex-col overflow-hidden rounded-[20px] bg-[#f5f5f5]">
      <TitleBar />
      <Toolbar />
      <div className="flex flex-1">
        <DataPane />
        <Cards />
        <Worksheet />
        <DataGuide />
      </div>
      <SheetTabs />
      <Status />
    </div>
  </div>
);

export default App;
